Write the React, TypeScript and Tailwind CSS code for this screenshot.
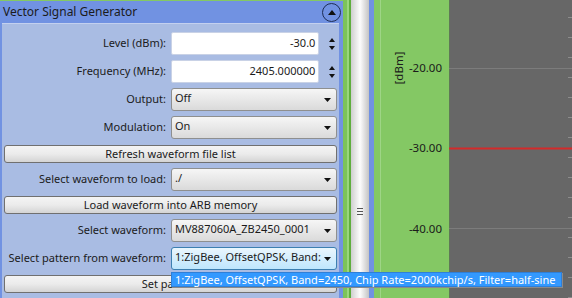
import { ReactNode } from 'react'

const font = "font-['Noto_Sans',sans-serif]"

function Arrow() {
  return (
    <svg width="7" height="4" viewBox="0 0 7 4" className="shrink-0 self-center">
      <path d="M0 0h7L3.5 4z" fill="#111" />
    </svg>
  )
}

function Spinner() {
  return (
    <div className="flex h-full w-[15px] flex-col items-center justify-center gap-[4px]">
      <svg width="6" height="4" viewBox="0 0 6 4">
        <path d="M0 4h6L3 0z" fill="#111" />
      </svg>
      <svg width="6" height="4" viewBox="0 0 6 4">
        <path d="M0 0h6L3 4z" fill="#111" />
      </svg>
    </div>
  )
}

function Label({ children }: { children: ReactNode }) {
  return <span className="w-[164px] shrink-0 text-right whitespace-nowrap">{children}</span>
}

function NumberRow({ label, value }: { label: string; value: string }) {
  return (
    <div className="flex h-[23px] items-center gap-[5px]">
      <Label>{label}</Label>
      <div className="flex h-full w-[152px] items-center justify-end rounded-[2px] border border-[#c9d2e6] bg-white pr-[3px]">
        {value}
      </div>
      <Spinner />
    </div>
  )
}

function SelectRow({ label, value, active }: { label: string; value: string; active?: boolean }) {
  return (
    <div className="flex h-[23px] items-center gap-[5px]">
      <Label>{label}</Label>
      <div
        className={
          active
            ? 'flex h-full w-[166px] items-start justify-between overflow-hidden rounded-[3px] border border-[#3c7fb1] bg-gradient-to-b from-[#eaf6fd] to-[#bee6fd] pl-[3px] pr-[5px] pt-[1px]'
            : 'flex h-full w-[166px] items-start justify-between overflow-hidden rounded-[3px] border border-[#8e8f8f] bg-gradient-to-b from-[#f6f6f6] to-[#dadada] pl-[3px] pr-[5px] pt-[1px]'
        }
      >
        <span className="whitespace-nowrap">{value}</span>
        <Arrow />
      </div>
    </div>
  )
}

function Button({ children }: { children: ReactNode }) {
  return (
    <div className="mx-[2px] h-[18px] rounded-[3px] border border-[#707070] bg-gradient-to-b from-[#f4f4f4] via-[#ebebeb] to-[#d4d4d4] text-center leading-[16px]">
      {children}
    </div>
  )
}

function GeneratorPanel() {
  return (
    <div className="flex h-full w-[343px] shrink-0 flex-col border-t border-[#84c864] bg-[#7192e2]">
      <div className="flex h-[22px] items-center justify-between pl-[3px] pr-[2px] text-[12px]">
        <span>Vector Signal Generator</span>
        <span className="grid h-[19px] w-[19px] place-items-center rounded-full border-[1.5px] border-[#1d2d55]">
          <svg width="8" height="5" viewBox="0 0 8 5">
            <path d="M0 5h8L4 0z" fill="#111" />
          </svg>
        </span>
      </div>
      <div className="ml-[2px] mr-[4px] flex flex-1 flex-col gap-[5px] border-t border-[#c3d0ef] bg-[#a9bce3] pt-[8px]">
        <NumberRow label="Level (dBm):" value="-30.0" />
        <NumberRow label="Frequency (MHz):" value="2405.000000" />
        <SelectRow label="Output:" value="Off" />
        <SelectRow label="Modulation:" value="On" />
        <div className="mt-[1px]">
          <Button>Refresh waveform file list</Button>
        </div>
        <SelectRow label="Select waveform to load:" value="./" />
        <Button>Load waveform into ARB memory</Button>
        <SelectRow label="Select waveform:" value="MV887060A_ZB2450_0001" />
        <SelectRow label="Select pattern from waveform:" value="1:ZigBee, OffsetQPSK, Band:" active />
        <Button>Set pattern</Button>
      </div>
    </div>
  )
}

function Splitter() {
  return (
    <div className="flex h-full shrink-0">
      <div className="flex w-[8px]">
        <div className="w-[4px] bg-[#7cc35a]" />
        <div className="w-[2px] bg-[#9ad67e]" />
        <div className="w-[2px] bg-[#5fae3e]" />
      </div>
      <div className="flex w-[18px] items-center justify-center bg-gradient-to-r from-[#cfcfcf] via-[#fdfdfd] to-[#c4c4c4]">
        <div className="mt-[124px] flex w-[6px] flex-col gap-[2px]">
          <div className="h-px bg-[#555]" />
          <div className="h-px bg-[#555]" />
          <div className="h-px bg-[#555]" />
        </div>
      </div>
      <div className="w-[5px] bg-[#7192e2]" />
    </div>
  )
}

function Chart() {
  const ticks = Array.from({ length: 15 }, (_, i) => 17 + i * 20)
  return (
    <div className="relative flex h-full flex-1">
      <div className="relative h-full w-[75px] shrink-0 bg-[#84c864]">
        <div className="absolute left-[6px] top-0 h-full w-px bg-[#9ed586]" />
        <span className="absolute left-[25px] top-[68px] -translate-x-1/2 -translate-y-1/2 -rotate-90 text-[11.5px]">[dBm]</span>
        {[
          ['-20.00', 68],
          ['-30.00', 148],
          ['-40.00', 229],
        ].map(([t, y]) => (
          <span
            key={t}
            className="absolute right-[7px] -translate-y-1/2 text-[11.5px] leading-none"
            style={{ top: y as number }}
          >
            {t}
          </span>
        ))}
      </div>
      <svg className="h-full flex-1 bg-[#676767]" width="123" height="298">
        <line x1="0" y1="0" x2="0" y2="298" stroke="#5a8a48" strokeWidth="1" />
        <line x1="0" y1="68.5" x2="123" y2="68.5" stroke="#7c7c7c" />
        <line x1="0" y1="228.5" x2="123" y2="228.5" stroke="#7c7c7c" />
        <line x1="0" y1="148.5" x2="123" y2="148.5" stroke="#d42a2a" strokeWidth="2" />
        {ticks.map((y) => (
          <line key={y} x1="119" y1={y + 0.5} x2="123" y2={y + 0.5} stroke="#8c8c8c" />
        ))}
      </svg>
    </div>
  )
}

export default function App() {
  return (
    <div className={`relative flex h-[298px] w-[572px] overflow-hidden bg-[#84c864] text-[11px] text-[#1b1b1b] ${font}`}>
      <GeneratorPanel />
      <Splitter />
      <Chart />
      <div className="absolute left-[171px] top-[272px] h-[15px] w-[391px] border border-[#2f7fd8] bg-[#3399ff] pl-[3px] leading-[13px] whitespace-nowrap text-white shadow-[1px_1px_0_#8a8a8a]">
        1:ZigBee, OffsetQPSK, Band=2450, Chip Rate=2000kchip/s, Filter=half-sine
      </div>
    </div>
  )
}
